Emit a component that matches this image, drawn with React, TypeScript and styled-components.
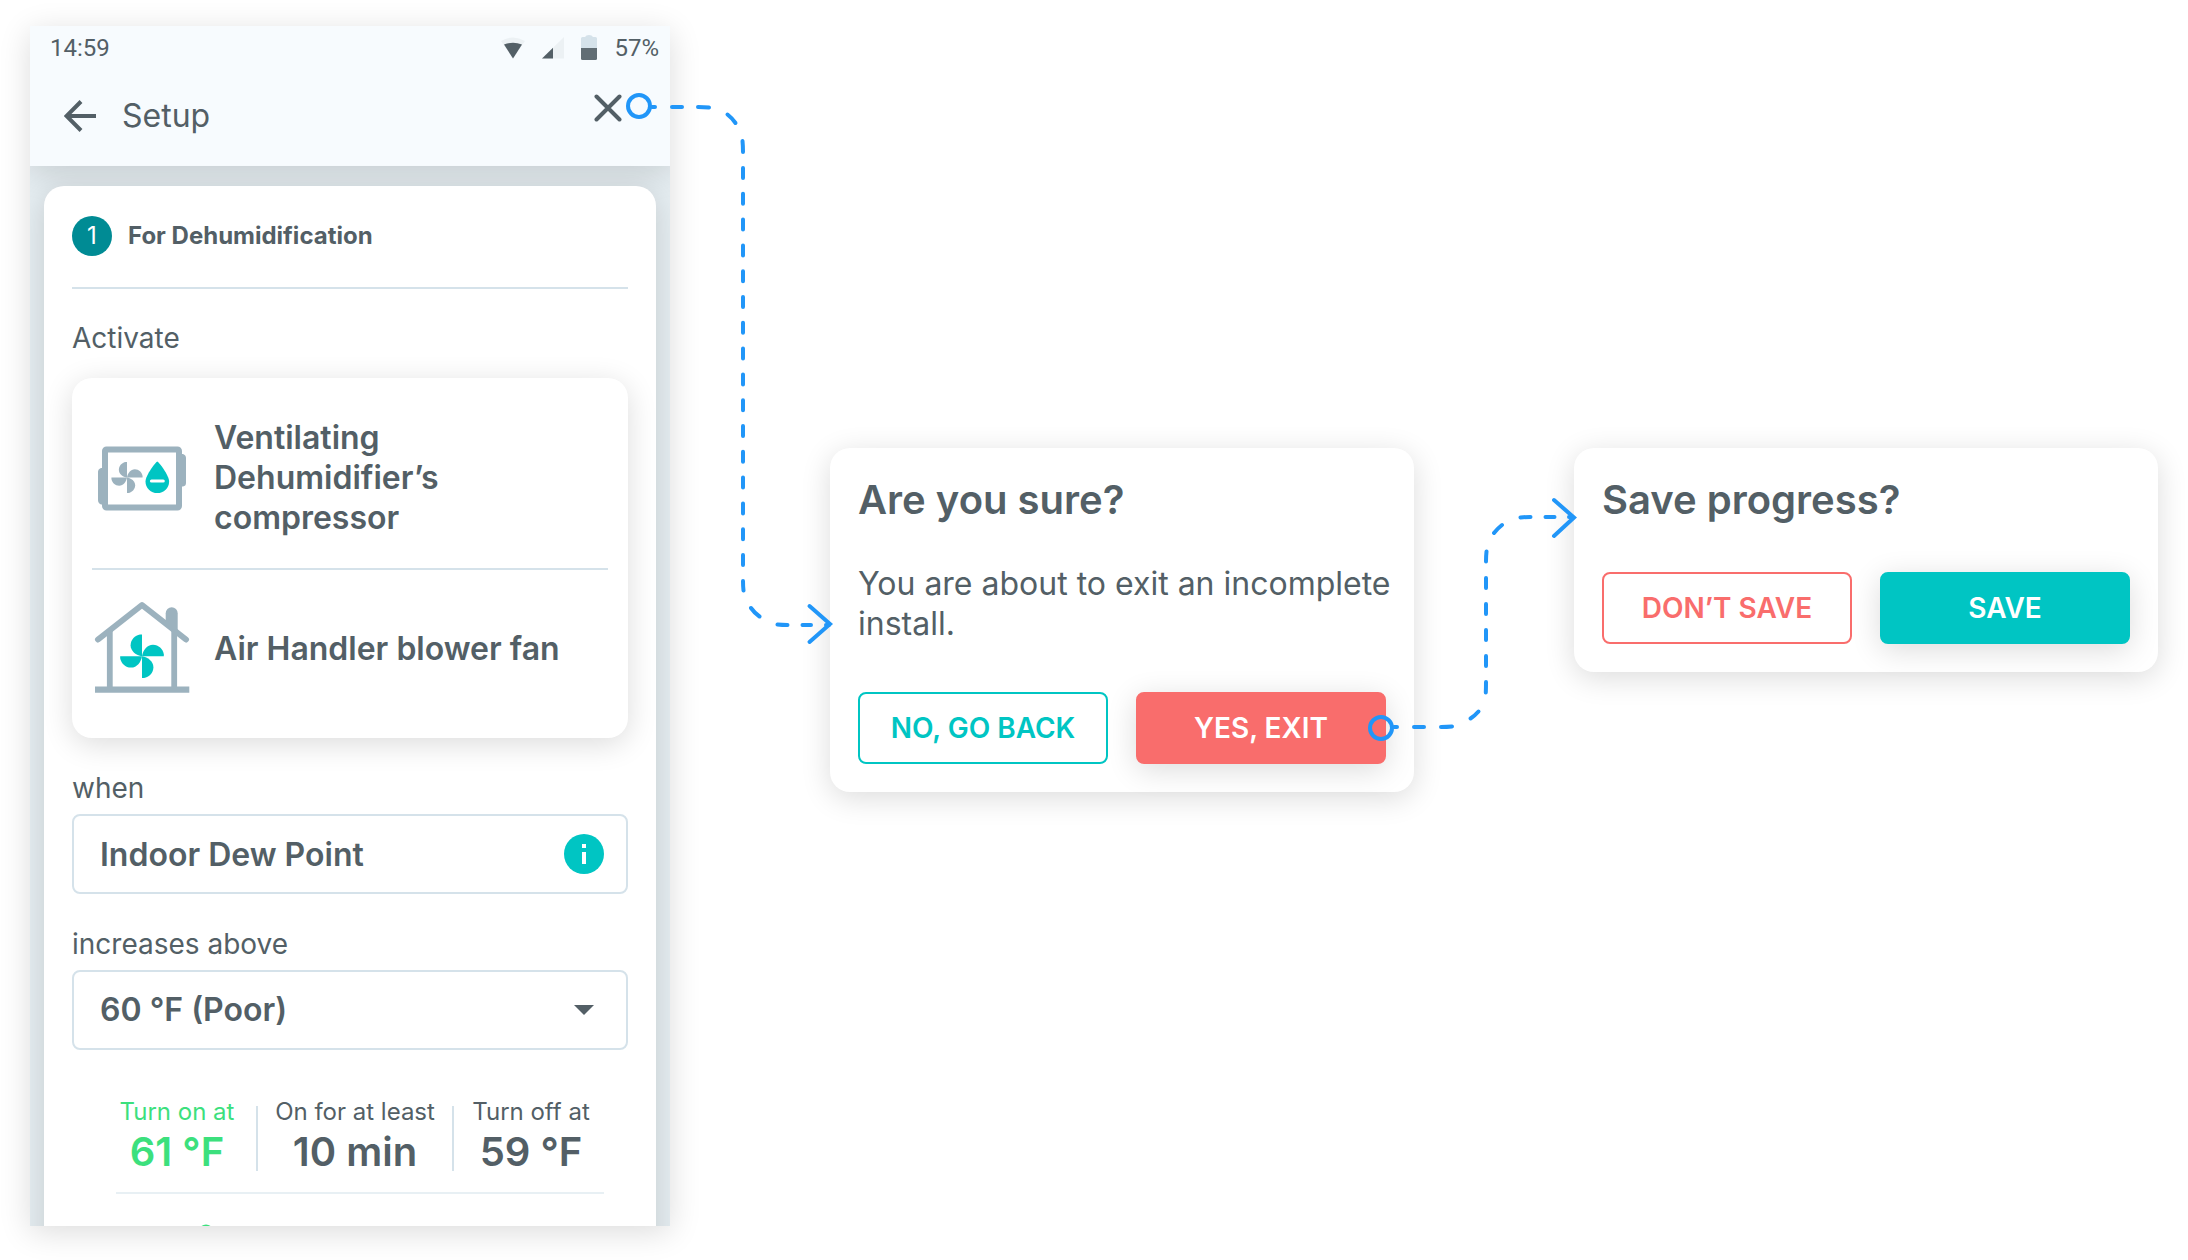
import React from "react";
import styled, { createGlobalStyle, css } from "styled-components";

const color = {
  text: "#535f66",
  line: "#d5e2ea",
  teal: "#00c5c3",
  deepTeal: "#008b94",
  red: "#f96d6c",
  green: "#3ce07d",
  blue: "#2196f8",
  steel: "#9cb2be",
  shade: "rgba(0, 0, 0, 0.14)",
};

const medium = 560;

const GlobalStyle = createGlobalStyle`
  *, *::before, *::after { box-sizing: border-box; }
  body {
    margin: 0;
    background: #fff;
    color: ${color.text};
    font-family: Inter, Roboto, sans-serif;
  }
  button, input, select { font: inherit; color: inherit; }
  h1, h2, p, ul { margin: 0; padding: 0; }
`;

const Board = styled.main`
  display: grid;
  grid-template-columns: 640fr 584fr 584fr;
  column-gap: 160px;
  align-items: start;
  min-height: 100vh;
  padding: 26px 30px 34px;
`;

const Step = styled.section<{ $lowered?: boolean }>`
  position: relative;
  min-width: 0;
  margin-top: ${(p) => (p.$lowered ? 422 : 0)}px;
`;

/* Connectors are overlays that bridge the gap after each step. */
const Connector = styled.svg<{ $top: number }>`
  position: absolute;
  z-index: 1;
  left: calc(100% - 50px);
  top: ${(p) => p.$top}px;
  fill: none;
  stroke: ${color.blue};
  stroke-width: 4;
  stroke-linecap: round;
  pointer-events: none;
`;

/* ---------- phone ---------- */

const Phone = styled.div`
  height: calc(100vh - 60px);
  overflow: hidden;
  background: #e5edf1;
  box-shadow: 0 6px 30px ${color.shade};
`;

const Header = styled.header`
  height: 140px;
  background: #f7fbfe;
  box-shadow: 0 6px 30px ${color.shade};
`;

const StatusBar = styled.div`
  display: flex;
  align-items: center;
  gap: 17px;
  height: 44px;
  padding: 0 11px 0 20px;
  font: 400 24px/28px Roboto, sans-serif;
`;

const Clock = styled.time`
  margin-right: auto;
`;

const NavBar = styled.div`
  display: flex;
  align-items: center;
  gap: 26px;
  height: 92px;
  padding: 0 48px 0 34px;
`;

const NavTitle = styled.h1`
  flex: 1;
  font-size: 32px;
  line-height: 40px;
  font-weight: 400;
`;

const IconButton = styled.button`
  display: flex;
  padding: 0;
  border: 0;
  background: none;
  cursor: pointer;
`;

const CloseButton = styled(IconButton)`
  align-self: flex-start;
  margin-top: 24px;
`;

const SetupCard = styled.article`
  margin: 20px 14px 0;
  padding: 30px 28px 60px;
  border-radius: 20px;
  background: #fff;
  box-shadow: 0 6px 30px ${color.shade};
`;

const CardHeader = styled.header`
  display: flex;
  align-items: center;
  gap: 16px;
  padding-bottom: 31px;
  border-bottom: 2px solid ${color.line};
`;

const StepNumber = styled.span`
  display: grid;
  place-items: center;
  width: 40px;
  height: 40px;
  border-radius: 50%;
  background: ${color.deepTeal};
  color: #fff;
  font-size: 24px;
  line-height: 32px;
`;

const CardTitle = styled.h2`
  font-size: 24px;
  line-height: 32px;
  font-weight: 700;
`;

const Caption = styled.p`
  margin: 31px 0 22px;
  font-size: 28px;
  line-height: 36px;
`;

const DeviceList = styled.ul`
  list-style: none;
  padding: 10px 20px;
  border-radius: 20px;
  background: #fff;
  box-shadow: 0 6px 30px ${color.shade};
`;

const Device = styled.li`
  display: flex;
  align-items: center;
  gap: 22px;
  padding: 30px 0;
  font-size: 32px;
  line-height: 40px;
  font-weight: ${medium};

  & + & {
    border-top: 2px solid ${color.line};
  }
`;

const DeviceIcon = styled.svg`
  flex: none;
  width: 100px;
  height: 100px;
  margin: -1px 0;
`;

const DeviceName = styled.span`
  max-width: 360px;
`;

const Field = styled.div`
  margin-top: 32px;
`;

const FieldLabel = styled.label`
  display: block;
  margin-bottom: 8px;
  font-size: 28px;
  line-height: 36px;
`;

const FieldBox = styled.div`
  position: relative;
  display: flex;
  align-items: center;
  height: 80px;
  padding-right: 22px;
  border: 2px solid ${color.line};
  border-radius: 8px;
`;

const control = css`
  flex: 1;
  min-width: 0;
  height: 100%;
  padding: 0 0 0 26px;
  border: 0;
  outline: 0;
  background: none;
  font-size: 32px;
  line-height: 40px;
  font-weight: ${medium};
`;

const TextControl = styled.input`
  ${control}
`;

const SelectControl = styled.select`
  ${control}
  appearance: none;
`;

const Caret = styled.svg`
  flex: none;
  pointer-events: none;
`;

const Stats = styled.div`
  display: grid;
  grid-template-columns: minmax(0, 122fr) 2px minmax(0, 158fr) 2px minmax(0, 118fr);
  column-gap: 18px;
  margin: 46px 24px 0 44px;
  padding: 0 14px 16px 0;
  border-bottom: 2px solid #e8f0f4;
`;

const Stat = styled.div<{ $tone?: string }>`
  display: flex;
  flex-direction: column;
  align-items: center;
  white-space: nowrap;
  color: ${(p) => p.$tone ?? color.text};
`;

const StatLabel = styled.span`
  font-size: 24px;
  line-height: 32px;
`;

const StatValue = styled.strong`
  font-size: 40px;
  line-height: 48px;
  font-weight: ${medium};
`;

const StatRule = styled.span`
  margin: 10px 0 5px;
  background: ${color.line};
`;

const NextRow = styled.div`
  display: flex;
  padding: 30px 0 0 126px;
`;

/* ---------- dialogs ---------- */

const Dialog = styled.div`
  padding: 28px;
  border-radius: 20px;
  background: #fff;
  box-shadow: 0 6px 30px ${color.shade};
`;

const DialogTitle = styled.h2`
  font-size: 40px;
  line-height: 48px;
  font-weight: ${medium};
`;

const DialogText = styled.p`
  margin: 40px -12px 0 0;
  font-size: 32px;
  line-height: 40px;
`;

const Actions = styled.div`
  display: grid;
  grid-template-columns: 1fr 1fr;
  gap: 28px;
  margin-top: 48px;
`;

const Action = styled.button<{ $tone: string; $filled?: boolean }>`
  height: 72px;
  border: 2px solid ${(p) => p.$tone};
  border-radius: 8px;
  background: ${(p) => (p.$filled ? p.$tone : "#fff")};
  color: ${(p) => (p.$filled ? "#fff" : p.$tone)};
  box-shadow: ${(p) => (p.$filled ? `0 6px 30px ${color.shade}` : "none")};
  font-size: 28px;
  line-height: 36px;
  font-weight: ${medium};
  cursor: pointer;
`;

/* ---------- drawings ---------- */

const BLADE = "M0 0V-21.8H-2C-7-21-11.4-16.6-11.4-11C-11.4-5-6-1 0 0Z";

const Fan = ({ at, scale = 1, fill }: { at: string; scale?: number; fill: string }) => (
  <g transform={`translate(${at}) scale(${scale})`} fill={fill}>
    {[0, 90, 180, 270].map((angle) => (
      <path key={angle} d={BLADE} transform={`rotate(${angle})`} />
    ))}
  </g>
);

const DehumidifierIcon = () => (
  <DeviceIcon viewBox="0 0 100 100" aria-hidden="true">
    <path
      d="M11 40H9Q6 41 6 44V72Q6 75 9 76.5H11ZM89 26H91Q94 27 94 30V55Q94 58 91 58.500H89Z"
      fill={color.steel}
    />
    <rect x="13" y="21.500" width="74" height="58" rx="1.500" fill="none" stroke={color.steel} strokeWidth="6" />
    <Fan at="35 49.5" scale={0.715} fill={color.steel} />
    <path
      d="M65.300 33.500C66.300 33.500 77.100 47 77.100 53.500A11.800 11.600 0 0 1 53.500 53.500C53.500 47 64.300 33.500 65.300 33.500Z"
      fill={color.teal}
    />
    <path d="M59.500 53H71.200" stroke="#fff" strokeWidth="3.200" strokeLinecap="round" />
  </DeviceIcon>
);

const HouseIcon = () => (
  <DeviceIcon viewBox="0 0 100 100" aria-hidden="true">
    <g fill="none" stroke={color.steel}>
      <path d="M6 40.500L50 6L94 40.500" strokeWidth="6" strokeLinecap="round" strokeLinejoin="round" />
      <path d="M17.800 31V90M82.200 31V90" strokeWidth="5.800" />
      <path d="M3 90.700H97.300" strokeWidth="6.200" />
    </g>
    <path d="M73.700 25V14.200A6 6 0 0 1 85.700 14.200V34Z" fill={color.steel} />
    <Fan at="50 57.2" fill={color.teal} />
  </DeviceIcon>
);

const StatusIcons = () => (
  <>
    <svg width="24" height="22" viewBox="0 0 24 22" aria-label="Wi-Fi">
      <path d="M0 4Q12-3 24 4L12 21.500Z" fill="#ecf1f4" />
      <path d="M3 7.500Q12 4 21 7.500L12 21.500Z" fill={color.text} />
    </svg>
    <svg width="22" height="22" viewBox="0 0 22 22" aria-label="Mobile signal">
      <path d="M22 0V21.500H0Z" fill="#ecf1f4" />
      <path d="M11 10.800V21.500H0Z" fill={color.text} />
    </svg>
    <svg width="16" height="26" viewBox="0 0 16 26" aria-label="Battery">
      <path d="M1.500 2H4Q5 0 8 0T12 2H14.500Q16 2 16 3.500V13H0V3.500Q0 2 1.500 2Z" fill="#d5e2ea" />
      <path d="M0 13H16V23.500Q16 25 14.500 25H1.500Q0 25 0 23.500Z" fill="#616d74" />
    </svg>
  </>
);

export default function App() {
  return (
    <>
      <GlobalStyle />
      <Board>
        <Step>
          <Phone>
            <Header>
              <StatusBar>
                <Clock>14:59</Clock>
                <StatusIcons />
                <span>57%</span>
              </StatusBar>
              <NavBar>
                <IconButton type="button" aria-label="Back">
                  <svg width="32" height="32" viewBox="0 0 32 32" fill="none" stroke={color.text} strokeWidth="4">
                    <path d="M32 16H3M17 1.500L2.500 16L17 30.500" />
                  </svg>
                </IconButton>
                <NavTitle>Setup</NavTitle>
                <CloseButton type="button" aria-label="Close">
                  <svg
                    width="28"
                    height="28"
                    viewBox="0 0 28 28"
                    fill="none"
                    stroke={color.text}
                    strokeWidth="4"
                    strokeLinecap="round"
                  >
                    <path d="M2.500 2.500L25.500 25.500M25.500 2.500L2.500 25.500" />
                  </svg>
                </CloseButton>
              </NavBar>
            </Header>

            <SetupCard>
              <CardHeader>
                <StepNumber>1</StepNumber>
                <CardTitle>For Dehumidification</CardTitle>
              </CardHeader>

              <Caption>Activate</Caption>
              <DeviceList>
                <Device>
                  <DehumidifierIcon />
                  <DeviceName>
                    Ventilating
                    <br />
                    Dehumidifier’s
                    <br />
                    compressor
                  </DeviceName>
                </Device>
                <Device>
                  <HouseIcon />
                  <DeviceName>Air Handler blower fan</DeviceName>
                </Device>
              </DeviceList>

              <Field>
                <FieldLabel htmlFor="metric">when</FieldLabel>
                <FieldBox>
                  <TextControl id="metric" defaultValue="Indoor Dew Point" readOnly />
                  <IconButton type="button" aria-label="About this metric">
                    <svg width="40" height="40" viewBox="0 0 40 40">
                      <circle cx="20" cy="20" r="20" fill={color.teal} />
                      <path d="M18 10H22V14H18ZM18 18H22V30H18Z" fill="#fff" />
                    </svg>
                  </IconButton>
                </FieldBox>
              </Field>

              <Field>
                <FieldLabel htmlFor="threshold">increases above</FieldLabel>
                <FieldBox>
                  <SelectControl id="threshold" defaultValue="60">
                    <option value="60">60 °F (Poor)</option>
                  </SelectControl>
                  <Caret width="40" height="40" viewBox="0 0 40 40" aria-hidden="true">
                    <path d="M10 15H30L20 25Z" fill={color.text} />
                  </Caret>
                </FieldBox>
              </Field>

              <Stats>
                <Stat $tone={color.green}>
                  <StatLabel>Turn on at</StatLabel>
                  <StatValue>61 °F</StatValue>
                </Stat>
                <StatRule />
                <Stat>
                  <StatLabel>On for at least</StatLabel>
                  <StatValue>10 min</StatValue>
                </Stat>
                <StatRule />
                <Stat>
                  <StatLabel>Turn off at</StatLabel>
                  <StatValue>59 °F</StatValue>
                </Stat>
              </Stats>
              <NextRow>
                <svg width="16" height="16" viewBox="0 0 16 16" aria-hidden="true">
                  <circle cx="8" cy="8" r="7.500" fill={color.green} />
                </svg>
              </NextRow>
            </SetupCard>
          </Phone>

          <Connector $top={64} width="220" height="560" viewBox="620 90 220 560" aria-hidden="true">
            <circle cx="639" cy="106" r="11" />
            <path d="M652 107H655M672 107H682M698 107Q704 107 709 107.500M727.500 114.500Q732 118 735.500 123M742.500 141Q743 146 743 152" />
            <path d="M743 168V570" strokeDasharray="10 15.8" />
            <path d="M743 581Q743 586 743.500 590.500M751 608Q754.500 613 759.500 616.500M777.500 624.500Q782 625 787.500 625M802.500 625H811M826 625H829" />
            <path d="M809.500 606L830 624L809.500 642" />
          </Connector>
        </Step>

        <Step $lowered>
          <Dialog role="dialog" aria-labelledby="exit-title">
            <DialogTitle id="exit-title">Are you sure?</DialogTitle>
            <DialogText>You are about to exit an incomplete install.</DialogText>
            <Actions>
              <Action type="button" $tone={color.teal}>
                NO, GO BACK
              </Action>
              <Action type="button" $tone={color.red} $filled>
                YES, EXIT
              </Action>
            </Actions>
          </Dialog>

          <Connector $top={42} width="220" height="260" viewBox="1364 490 220 260" aria-hidden="true">
            <circle cx="1381" cy="728" r="11" />
            <path d="M1394 727H1397M1414 727H1424M1441 727Q1447 727 1452 726.500M1470.500 718.500Q1475 715.500 1478.500 711.500M1485.800 692.500Q1486 688 1486 682" />
            <path d="M1486 666V570" strokeDasharray="10 16" />
            <path d="M1486 561.500Q1486 556 1486.500 551.500M1494 533Q1497.500 528.500 1502 525M1520.500 517.500Q1525 517 1530.500 517M1545.500 517H1554.500M1569 517H1572" />
            <path d="M1554 500L1574 517.500L1554 536" />
          </Connector>
        </Step>

        <Step $lowered>
          <Dialog role="dialog" aria-labelledby="save-title">
            <DialogTitle id="save-title">Save progress?</DialogTitle>
            <Actions>
              <Action type="button" $tone={color.red}>
                DON’T SAVE
              </Action>
              <Action type="button" $tone={color.teal} $filled>
                SAVE
              </Action>
            </Actions>
          </Dialog>
        </Step>
      </Board>
    </>
  );
}
